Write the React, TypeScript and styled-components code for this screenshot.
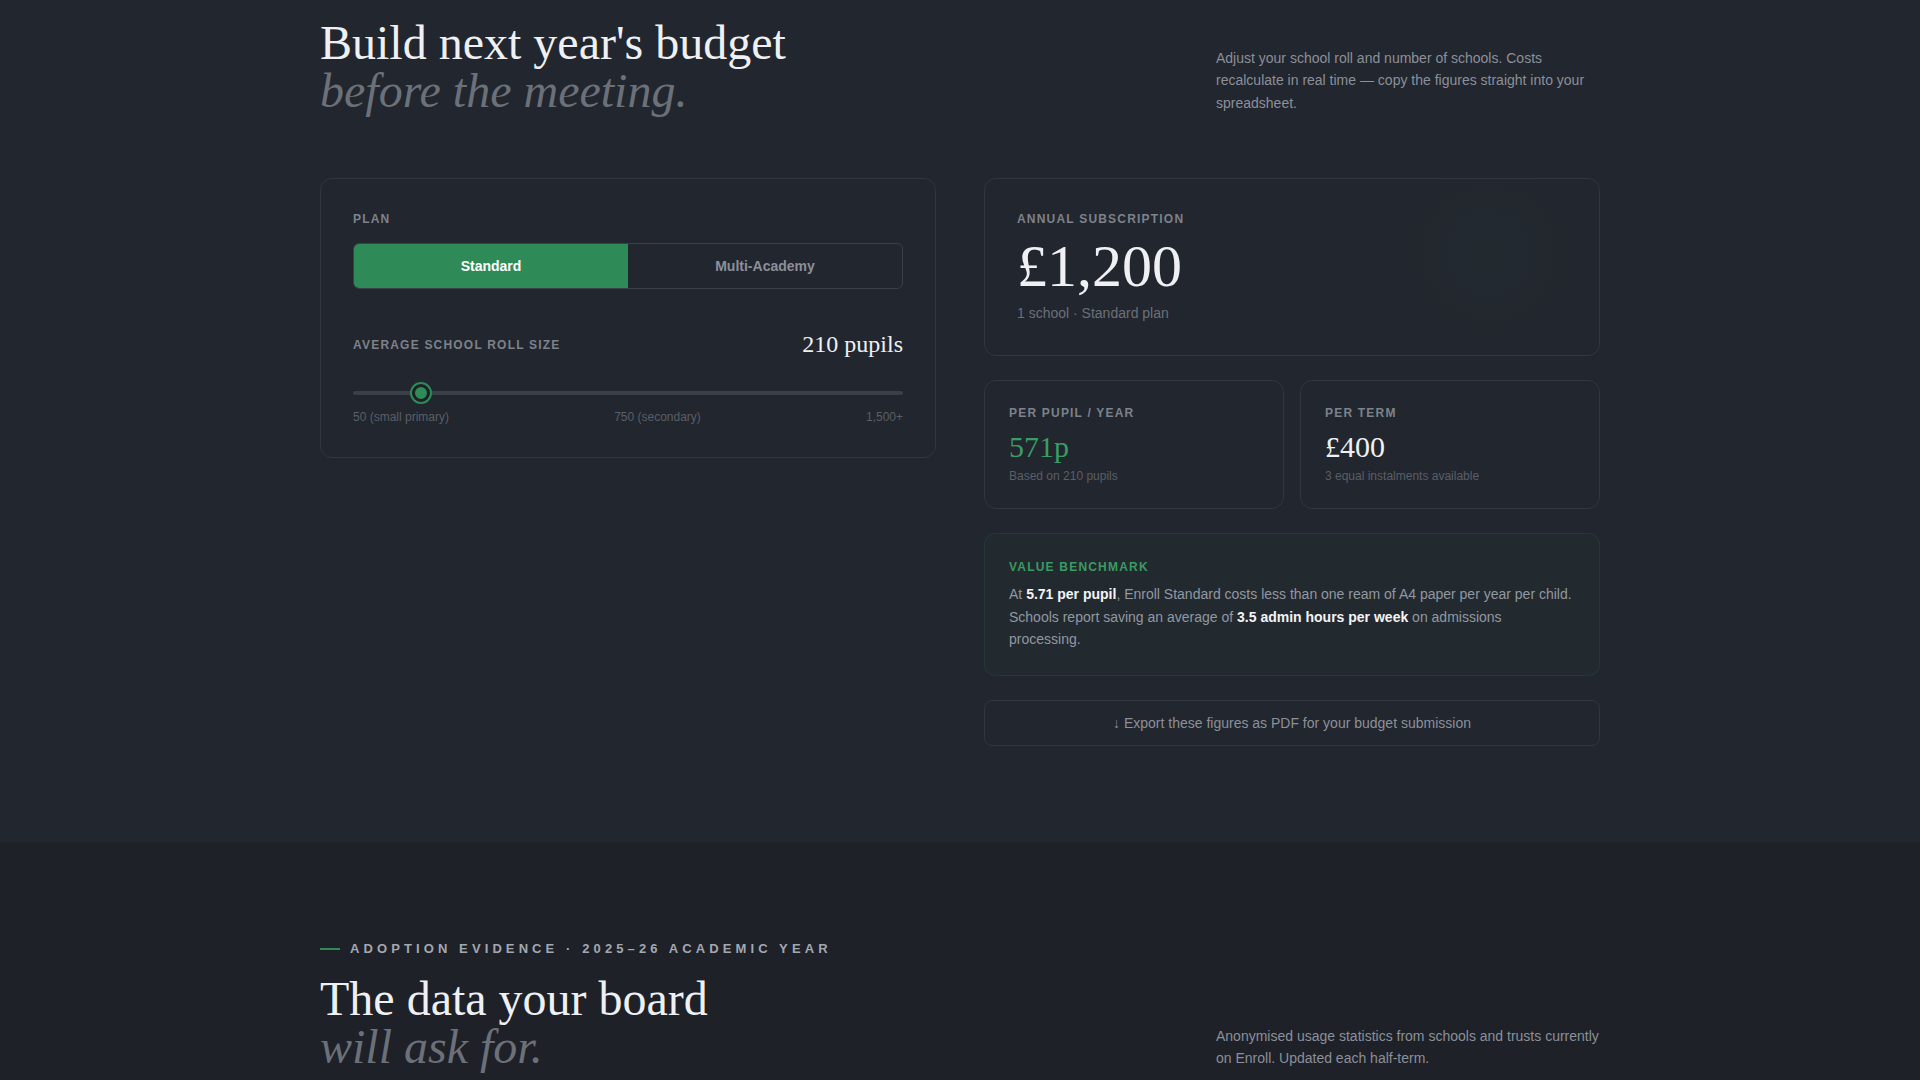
import React, { useState } from "react";
import styled, { createGlobalStyle } from "styled-components";

const GREEN = "#2e8b57";

const GlobalStyle = createGlobalStyle`
  * { box-sizing: border-box; }
  html, body { margin: 0; padding: 0; background: #1e2128; }
  body {
    font-family: "Liberation Sans", Arial, sans-serif;
    color: #eef0f3;
    -webkit-font-smoothing: antialiased;
  }
`;

const Section = styled.section<{ $tone: "raised" | "base"; $top: number; $bottom: number }>`
  background: ${(p) => (p.$tone === "raised" ? "#22262e" : "#1e2128")};
  padding: ${(p) => p.$top}px 0 ${(p) => p.$bottom}px;
`;

const Container = styled.div`
  width: 1280px;
  margin: 0 auto;
`;

const SectionHead = styled.header<{ $gap: number }>`
  display: flex;
  justify-content: space-between;
  align-items: flex-end;
  margin-bottom: ${(p) => p.$gap}px;
`;

const Eyebrow = styled.div`
  display: flex;
  align-items: center;
  gap: 10px;
  font-size: 13px;
  line-height: 18px;
  font-weight: 700;
  letter-spacing: 4.1px;
  text-transform: uppercase;
  color: #a3a8b0;
  margin-bottom: 17px;

  &::before {
    content: "";
    width: 20px;
    height: 2px;
    background: ${GREEN};
  }
`;

const Title = styled.h2`
  margin: 0;
  font-family: "Liberation Serif", "Times New Roman", serif;
  font-weight: 400;
  font-size: 48px;
  line-height: 48px;
  color: #eef0f3;
`;

const TitleAccent = styled.em`
  display: block;
  font-style: italic;
  color: #6b7079;
`;

const Lede = styled.p`
  margin: 0 0 1px;
  max-width: 384px;
  font-size: 14px;
  line-height: 1.6;
  color: #8b9099;
`;

const CalcGrid = styled.div`
  display: grid;
  grid-template-columns: 1fr 1fr;
  gap: 48px;
  align-items: start;
`;

const Card = styled.div<{ $pad: number; $variant?: "plain" | "tint" | "glow" }>`
  position: relative;
  overflow: hidden;
  border-radius: 12px;
  padding: ${(p) => p.$pad}px;
  border: 1px solid
    ${(p) => (p.$variant === "tint" ? "rgba(46, 139, 87, 0.16)" : "#31363f")};
  background: ${(p) =>
    p.$variant === "tint"
      ? "rgba(46, 139, 87, 0.045)"
      : p.$variant === "glow"
      ? "radial-gradient(circle at 82% 42%, rgba(46, 139, 87, 0.035), rgba(46, 139, 87, 0) 110px), #22262e"
      : "#22262e"};
`;

const Label = styled.div<{ $accent?: boolean }>`
  font-size: 12px;
  line-height: 16px;
  font-weight: 700;
  letter-spacing: 0.1em;
  text-transform: uppercase;
  color: ${(p) => (p.$accent ? "#3a9a62" : "#7d828b")};
`;

const Segmented = styled.div`
  display: grid;
  grid-template-columns: 1fr 1fr;
  margin-top: 16px;
  border: 1px solid #3a3f48;
  border-radius: 6px;
  overflow: hidden;
`;

const SegButton = styled.button<{ $active: boolean }>`
  height: 44px;
  border: none;
  margin: 0;
  font-family: inherit;
  font-size: 14px;
  font-weight: 700;
  cursor: pointer;
  background: ${(p) => (p.$active ? GREEN : "transparent")};
  color: ${(p) => (p.$active ? "#ffffff" : "#8b9099")};
`;

const RollRow = styled.div`
  display: flex;
  justify-content: space-between;
  align-items: center;
  margin-top: 41px;
`;

const RollValue = styled.div`
  font-family: "Liberation Serif", "Times New Roman", serif;
  font-size: 24px;
  line-height: 29px;
  color: #eef0f3;
`;

const Range = styled.input`
  display: block;
  width: 100%;
  height: 20px;
  margin: 24px 0 0;
  background: transparent;
  -webkit-appearance: none;
  appearance: none;

  &::-webkit-slider-runnable-track {
    height: 4px;
    border-radius: 2px;
    background: #3a3f48;
  }

  &::-webkit-slider-thumb {
    -webkit-appearance: none;
    appearance: none;
    width: 18px;
    height: 18px;
    margin-top: -7px;
    border-radius: 50%;
    background: ${GREEN};
    border: 3px solid #1d2026;
    box-shadow: 0 0 0 2px ${GREEN};
    cursor: pointer;
  }
`;

const Ticks = styled.div`
  display: flex;
  justify-content: space-between;
  margin-top: 6px;
  font-size: 12px;
  line-height: 16px;
  color: #5a5f67;
`;

const Column = styled.div`
  display: flex;
  flex-direction: column;
  gap: 24px;
`;

const BigAmount = styled.div`
  margin-top: 9px;
  font-family: "Liberation Serif", "Times New Roman", serif;
  font-size: 60px;
  line-height: 60px;
  color: #eef0f3;
`;

const Meta = styled.div`
  margin-top: 7px;
  font-size: 14px;
  line-height: 20px;
  color: #6b7079;
`;

const StatGrid = styled.div`
  display: grid;
  grid-template-columns: 1fr 1fr;
  gap: 16px;
`;

const StatValue = styled.div<{ $accent?: boolean }>`
  margin-top: 9px;
  font-family: "Liberation Serif", "Times New Roman", serif;
  font-size: 30px;
  line-height: 33px;
  color: ${(p) => (p.$accent ? "#3a9d63" : "#eef0f3")};
`;

const StatNote = styled.div`
  margin-top: 5px;
  font-size: 12px;
  line-height: 16px;
  color: #5a5f67;
`;

const BenchBody = styled.div`
  padding-top: 1px;
`;

const BenchText = styled.p`
  margin: 8px 0 0;
  font-size: 14px;
  line-height: 22.5px;
  color: #9297a0;

  strong {
    color: #f3f4f6;
    font-weight: 700;
  }
`;

const ExportButton = styled.button`
  display: block;
  width: 100%;
  padding: 12px;
  margin: 0;
  font-family: inherit;
  font-size: 14px;
  line-height: 20px;
  color: #8b9099;
  background: transparent;
  border: 1px solid #31363f;
  border-radius: 8px;
  cursor: pointer;
`;

type Plan = "standard" | "mat";

export default function App() {
  const [plan, setPlan] = useState<Plan>("standard");
  const [roll, setRoll] = useState(210);

  const annual = 1200;
  const perPupil = annual / roll;
  const pence = Math.round(perPupil * 100);
  const perTerm = Math.round(annual / 3);
  const planName = plan === "standard" ? "Standard" : "Multi-Academy";

  return (
    <>
      <GlobalStyle />
      <Section $tone="raised" $top={19} $bottom={96}>
        <Container>
          <SectionHead $gap={63}>
            <Title>
              Build next year's budget
              <TitleAccent>before the meeting.</TitleAccent>
            </Title>
            <Lede>
              Adjust your school roll and number of schools. Costs recalculate in real time — copy
              the figures straight into your spreadsheet.
            </Lede>
          </SectionHead>

          <CalcGrid>
            <Card $pad={32}>
              <Label>Plan</Label>
              <Segmented>
                <SegButton $active={plan === "standard"} onClick={() => setPlan("standard")}>
                  Standard
                </SegButton>
                <SegButton $active={plan === "mat"} onClick={() => setPlan("mat")}>
                  Multi-Academy
                </SegButton>
              </Segmented>

              <RollRow>
                <Label>Average school roll size</Label>
                <RollValue>{roll} pupils</RollValue>
              </RollRow>
              <Range
                type="range"
                min={50}
                max={1500}
                step={10}
                value={roll}
                onChange={(e) => setRoll(Number(e.target.value))}
                aria-label="Average school roll size"
              />
              <Ticks>
                <span>50 (small primary)</span>
                <span>750 (secondary)</span>
                <span>1,500+</span>
              </Ticks>
            </Card>

            <Column>
              <Card $pad={32} $variant="glow">
                <Label>Annual subscription</Label>
                <BigAmount>£{annual.toLocaleString("en-GB")}</BigAmount>
                <Meta>1 school · {planName} plan</Meta>
              </Card>

              <StatGrid>
                <Card $pad={24}>
                  <Label>Per pupil / year</Label>
                  <StatValue $accent>{pence}p</StatValue>
                  <StatNote>Based on {roll} pupils</StatNote>
                </Card>
                <Card $pad={24}>
                  <Label>Per term</Label>
                  <StatValue>£{perTerm}</StatValue>
                  <StatNote>3 equal instalments available</StatNote>
                </Card>
              </StatGrid>

              <Card $pad={24} $variant="tint">
                <BenchBody>
                  <Label $accent>Value benchmark</Label>
                  <BenchText>
                    At <strong>{perPupil.toFixed(2)} per pupil</strong>, Enroll {planName} costs
                    less than one ream of A4 paper per year per child. Schools report saving an
                    average of <strong>3.5 admin hours per week</strong> on admissions processing.
                  </BenchText>
                </BenchBody>
              </Card>

              <ExportButton>↓ Export these figures as PDF for your budget submission</ExportButton>
            </Column>
          </CalcGrid>
        </Container>
      </Section>

      <Section $tone="base" $top={98} $bottom={120}>
        <Container>
          <SectionHead $gap={48}>
            <div>
              <Eyebrow>Adoption evidence · 2025–26 academic year</Eyebrow>
              <Title>
                The data your board
                <TitleAccent>will ask for.</TitleAccent>
              </Title>
            </div>
            <Lede>
              Anonymised usage statistics from schools and trusts currently on Enroll. Updated each
              half-term.
            </Lede>
          </SectionHead>
        </Container>
      </Section>
    </>
  );
}
